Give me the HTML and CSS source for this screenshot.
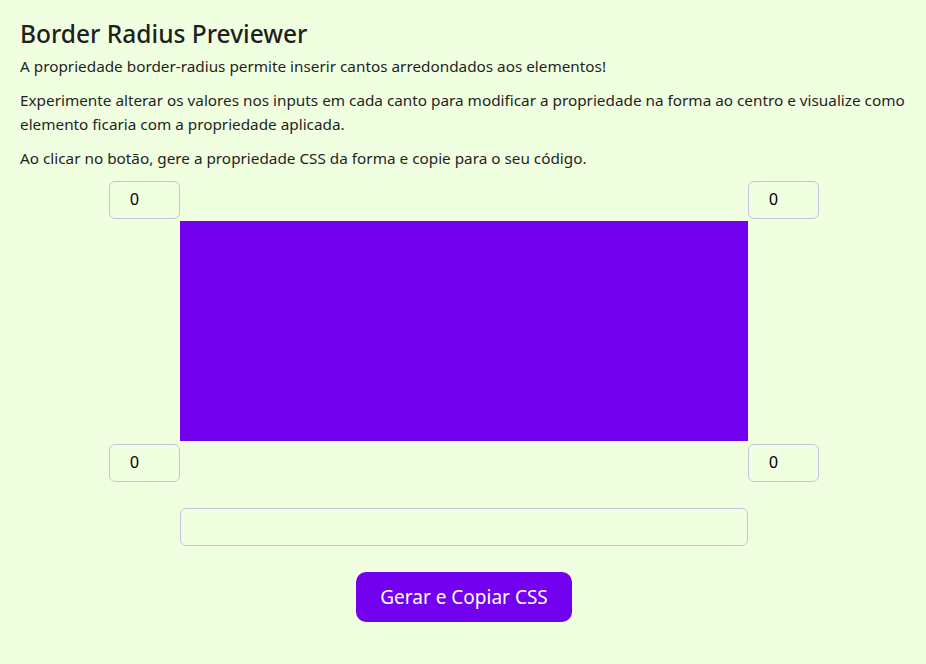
FILE: index.html
```html
<!DOCTYPE html>
<html lang="pt-BR">
<head>
<meta charset="utf-8">
<title>Border Radius Previewer</title>
<link rel="stylesheet" href="styles.css">
</head>
<body>
<main class="page">
  <h1 class="title">Border Radius Previewer</h1>
  <p class="text">A propriedade border-radius permite inserir cantos arredondados aos elementos!</p>
  <p class="text">Experimente alterar os valores nos inputs em cada canto para modificar a propriedade na forma ao centro e visualize como elemento ficaria com a propriedade aplicada.</p>
  <p class="text">Ao clicar no botão, gere a propriedade CSS da forma e copie para o seu código.</p>

  <section class="editor">
    <input class="corner tl" type="text" value="0">
    <input class="corner tr" type="text" value="0">
    <div class="shape"></div>
    <input class="corner bl" type="text" value="0">
    <input class="corner br" type="text" value="0">
    <input class="output" type="text" value="">
  </section>
  <div class="actions">
    <button class="btn">Gerar e Copiar CSS</button>
  </div>
</main>
</body>
</html>
```
FILE: styles.css
```css
* { box-sizing: border-box; }
html, body { margin: 0; padding: 0; }
body {
  background: #f1ffe1;
  color: #1f1f1f;
  font-family: "Noto Sans", "Open Sans", sans-serif;
}
.page {
  padding: 14px 20px 20px;
}
.title {
  font-size: 24.5px;
  font-weight: 500;
  margin: 2px 0 2px;
  line-height: 36px;
}
.text {
  font-size: 15.3px;
  line-height: 24px;
  margin: 0 0 10px;
}
.editor {
  display: grid;
  grid-template-columns: 71px 568px 71px;
  grid-template-rows: 38px 222px 41px auto;
  justify-content: center;
  margin-top: 11px;
  padding-left: 2px;
}
.corner {
  width: 71px;
  height: 38px;
  border: 1px solid #c9c0e3;
  border-radius: 6px;
  background: transparent;
  padding: 0 0 0 20px;
  font-family: "Liberation Sans", Arial, sans-serif;
  font-size: 16px;
  color: #000;
}
.tl { grid-column: 1; grid-row: 1; }
.tr { grid-column: 3; grid-row: 1; }
.bl { grid-column: 1; grid-row: 3; margin-top: 3px; }
.br { grid-column: 3; grid-row: 3; margin-top: 3px; }
.shape {
  grid-column: 2;
  grid-row: 2;
  background: #7400f0;
  margin-top: 2px;
}
.output {
  grid-column: 2;
  grid-row: 4;
  height: 38px;
  margin-top: 26px;
  border: 1px solid #c9c0e3;
  border-radius: 6px;
  background: transparent;
}
.actions {
  display: flex;
  justify-content: center;
  margin-top: 26px;
  padding-left: 2px;
}
.btn {
  width: 216px;
  height: 50px;
  background: #7400f0;
  color: #fff;
  border: none;
  border-radius: 10px;
  font-family: "Noto Sans", "Open Sans", sans-serif;
  font-size: 19px;
}
```
